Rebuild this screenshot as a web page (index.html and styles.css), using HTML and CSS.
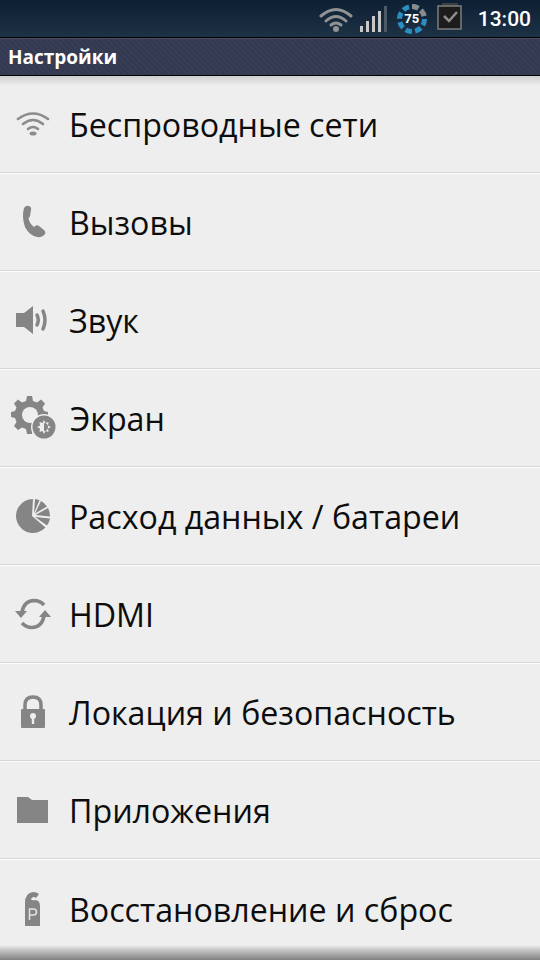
FILE: index.html
```html
<!DOCTYPE html>
<html>
  <head>
    <meta charset="UTF-8">
    <meta name="viewport" content="width=device-width, initial-scale=1" />
    <title>Настройки</title>
    <link rel="stylesheet" href="styles.css">
  </head>
  <body>
    <div class="status-bar">
      <svg class="st-wifi" width="34" height="26" viewBox="0 0 34 26">
        <g fill="none" stroke="#8f9394" stroke-width="3" stroke-linecap="round">
          <path d="M2 10 Q17 -3 32 10"/>
          <path d="M7 15 Q17 6 27 15"/>
          <path d="M12 19 Q17 15 22 19"/>
        </g>
        <circle cx="17" cy="23" r="3" fill="#8f9394"/>
      </svg>
      <svg class="st-signal" width="28" height="28" viewBox="0 0 28 28">
        <rect x="0" y="20" width="3" height="6" fill="#c8c8c8"/>
        <rect x="6" y="15" width="3" height="11" fill="#c8c8c8"/>
        <rect x="12" y="10" width="3" height="16" fill="#c8c8c8"/>
        <rect x="18" y="5" width="3" height="21" fill="#c8c8c8"/>
        <rect x="24" y="0" width="3" height="26" fill="#4c5966"/>
      </svg>
      <div class="st-battery">
        <svg width="30" height="30" viewBox="0 0 30 30">
          <circle cx="15" cy="15" r="12.5" fill="none" stroke="#2a8fc0" stroke-width="5" stroke-dasharray="6.5 3.3"/>
          <path d="M15 2.5 A12.5 12.5 0 0 1 27.5 15" fill="none" stroke="#8a8a8a" stroke-width="5" stroke-dasharray="6.5 3.3"/>
        </svg>
        <span class="st-battery-num">75</span>
      </div>
      <svg class="st-task" width="26" height="30" viewBox="0 0 26 30">
        <rect x="5" y="0" width="16" height="3" fill="#3c3f42"/>
        <rect x="1" y="3" width="23" height="23" fill="#1c1c1c" stroke="#7d7d7d" stroke-width="1.5"/>
        <path d="M7 13 L12 18 L20 9" fill="none" stroke="#8f8f8f" stroke-width="2.5"/>
      </svg>
      <span class="st-time">13:00</span>
    </div>

    <div class="title-bar">Настройки</div>

    <div class="settings-list">
      <div class="row">
        <svg class="row-icon" width="36" height="30" viewBox="0 0 36 30">
          <g fill="none" stroke="#8c8c8c" stroke-width="2.6" stroke-linecap="round">
            <path d="M3 10 Q18 -1 33 10"/>
            <path d="M8 15 Q18 7 28 15"/>
            <path d="M13 20 Q18 16 23 20"/>
          </g>
          <ellipse cx="18" cy="24.5" rx="3.5" ry="2" fill="#8c8c8c"/>
        </svg>
        <span class="row-label">Беспроводные сети</span>
      </div>
      <div class="row">
        <svg class="row-icon" width="36" height="36" viewBox="0 0 36 36">
          <path d="M9 4 Q11 1 14 2 L15.5 3 Q16.5 4 16 6 L15 12 Q14.5 14 13.5 14 Q14 19 19 23 L21 21.5 Q22.5 21 24 22 L29.5 26.5 Q31 28 30 30 L28 32 Q26 33.5 22 33 Q14 31 10 23 Q6.5 13 9 4 Z" fill="#858585"/>
        </svg>
        <span class="row-label">Вызовы</span>
      </div>
      <div class="row">
        <svg class="row-icon" width="36" height="30" viewBox="0 0 36 30">
          <path d="M1 8 H9 L18 1 V29 L9 22 H1 Z" fill="#858585"/>
          <g fill="none" stroke="#858585" stroke-linecap="round">
            <path d="M22 10 Q24.5 15 22 20" stroke-width="3.5"/>
            <path d="M28 6 Q32 15 28 24" stroke-width="3.5"/>
          </g>
        </svg>
        <span class="row-label">Звук</span>
      </div>
      <div class="row">
        <svg class="row-icon row-icon-wide" width="46" height="44" viewBox="0 0 46 44">
          <path d="M16 0 H21 L22 5 L26 6.5 L30 3.5 L34 7.5 L31.5 11.5 L33 15 L37 16 V21 L33 22 L31.5 26 L34 30 L30 34 L26 31.5 L22 33 L21 38 H16 L15 33 L11 31.5 L7 34 L3 30 L5.5 26 L4 22 L0 21 V16 L4 15 L5.5 11.5 L3 7.5 L7 3.5 L11 6.5 L15 5 Z" fill="#858585"/>
          <circle cx="19" cy="19" r="8" fill="#eeeeee"/>
          <circle cx="33" cy="31" r="13" fill="#eeeeee"/>
          <circle cx="33" cy="31" r="11.5" fill="#858585"/>
          <path d="M33 24 L34.5 27 L37.5 26 L37 29.5 L40 31 L37 32.5 L37.5 36 L34.5 35 L33 38 L31.5 35 L28.5 36 L29 32.5 L26 31 L29 29.5 L28.5 26 L31.5 27 Z" fill="#eeeeee"/>
          <path d="M33 27 A4 4 0 0 1 33 35 Z" fill="#858585"/>
        </svg>
        <span class="row-label">Экран</span>
      </div>
      <div class="row">
        <svg class="row-icon" width="36" height="36" viewBox="0 0 36 36">
          <g fill="#858585">
            <path d="M17 18 L18 1 A17 17 0 1 0 30.5 29.5 Z"/>
            <path d="M19 15 L20 1.1 A17 17 0 0 1 24.5 2.3 Z"/>
            <path d="M20 15.5 L26 3 A17 17 0 0 1 32 8.5 Z"/>
            <path d="M20.5 17 L33 10 A17 17 0 0 1 35 18.5 Z"/>
            <path d="M20 19 L35 20.5 A17 17 0 0 1 32 27.5 Z"/>
          </g>
        </svg>
        <span class="row-label">Расход данных / батареи</span>
      </div>
      <div class="row">
        <svg class="row-icon" width="36" height="32" viewBox="0 0 36 32">
          <g fill="none" stroke="#858585" stroke-width="3.6">
            <path d="M7 14 Q9 3 19 2.5 Q25 2.5 29 7"/>
            <path d="M29 18 Q27 29 17 29.5 Q11 29.5 7 25"/>
          </g>
          <path d="M0 13 L12 13 L6 20 Z" fill="#858585"/>
          <path d="M24 19 L36 19 L30 12 Z" fill="#858585"/>
        </svg>
        <span class="row-label">HDMI</span>
      </div>
      <div class="row">
        <svg class="row-icon" width="36" height="34" viewBox="0 0 36 34">
          <path d="M10 14 V10 Q10 2 18 2 Q26 2 26 10 V14" fill="none" stroke="#858585" stroke-width="3.5"/>
          <rect x="6" y="14" width="24" height="19" rx="1" fill="#858585"/>
          <circle cx="18" cy="21" r="3" fill="#eeeeee"/>
          <rect x="16.8" y="22" width="2.4" height="7" fill="#eeeeee"/>
        </svg>
        <span class="row-label">Локация и безопасность</span>
      </div>
      <div class="row">
        <svg class="row-icon" width="36" height="28" viewBox="0 0 36 28">
          <path d="M2 1 H13 L17 4 H33 V27 H2 Z" fill="#858585"/>
        </svg>
        <span class="row-label">Приложения</span>
      </div>
      <div class="row">
        <svg class="row-icon" width="36" height="36" viewBox="0 0 36 36">
          <path d="M10 12 Q10 2 18 1 Q22 1 24 3 L21 7 Q18 4.5 16 8 Q16.5 10 20 9 Q25 9 25 15 V35 H10 Z" fill="#858585"/>
          <path d="M14.5 29 V18 H18.5 Q21.5 18 21.5 21 Q21.5 24 18.5 24 H14.5" fill="none" stroke="#e4e4e4" stroke-width="1.5"/>
        </svg>
        <span class="row-label">Восстановление и сброс</span>
      </div>
    </div>
    <div class="bottom-edge"></div>
  </body>
</html>
```

FILE: styles.css
```css
html, body { margin: 0; padding: 0; }
body {
  position: relative;
  width: 540px;
  height: 960px;
  overflow: hidden;
  background: #eeeeee;
  font-family: "Open Sans", Roboto, sans-serif;
  display: flex;
  flex-direction: column;
}
.status-bar {
  box-sizing: border-box;
  background: linear-gradient(#0c1f33, #1e3246);
  border-bottom: 1px solid #000;
  height: 38px;
  flex: none;
  display: flex;
  align-items: center;
  justify-content: flex-end;
  padding-right: 9px;
}
.st-wifi { margin-right: 7px; }
.st-signal { margin-right: 9px; margin-top: 2px; }
.st-battery {
  position: relative;
  width: 30px;
  height: 30px;
  margin-right: 10px;
}
.st-battery-num {
  position: absolute;
  left: 0;
  right: 0;
  top: 7px;
  text-align: center;
  font-family: Roboto, sans-serif;
  font-size: 13px;
  line-height: 16px;
  font-weight: 700;
  color: #fff;
}
.st-task { margin-right: 15px; margin-top: -2px; }
.st-time {
  color: #fff;
  font-family: Roboto, sans-serif;
  font-size: 21px;
  font-weight: 500;
  line-height: 24px;
}
.title-bar {
  height: 38px;
  flex: none;
  box-sizing: border-box;
  background-color: #343a52;
  background-image: repeating-linear-gradient(45deg, rgba(255,255,255,0.015) 0 2px, rgba(0,0,0,0.02) 2px 4px);
  border-top: 1px solid #4a4f66;
  border-bottom: 1px solid #000;
  color: #fff;
  font-size: 19px;
  font-weight: 700;
  line-height: 36px;
  padding-left: 8px;
}
.settings-list {
  flex: 1;
  background: linear-gradient(#cfcfcf, #eeeeee 10px);
  display: flex;
  flex-direction: column;
}
.row {
  height: 98px;
  flex: none;
  box-sizing: border-box;
  border-bottom: 1px solid #d6d6d6;
  box-shadow: 0 1px 0 #fbfbfb;
  display: flex;
  align-items: center;
}
.row:first-child { height: 97px; }
.row:last-child { border-bottom: none; box-shadow: none; height: 99px; }
.row-icon {
  flex: none;
  margin-left: 15px;
  margin-right: 18px;
}
.row-icon-wide {
  margin-left: 11px;
  margin-right: 13px;
}
.row-label {
  font-size: 32.2px;
  line-height: 40px;
  margin-top: 2px;
  color: #0d0d0d;
}
.bottom-edge {
  position: absolute;
  left: 0;
  right: 0;
  bottom: 0;
  height: 15px;
  background: linear-gradient(#eeeeee, #c4c4c4 35%, #808080);
}
```
